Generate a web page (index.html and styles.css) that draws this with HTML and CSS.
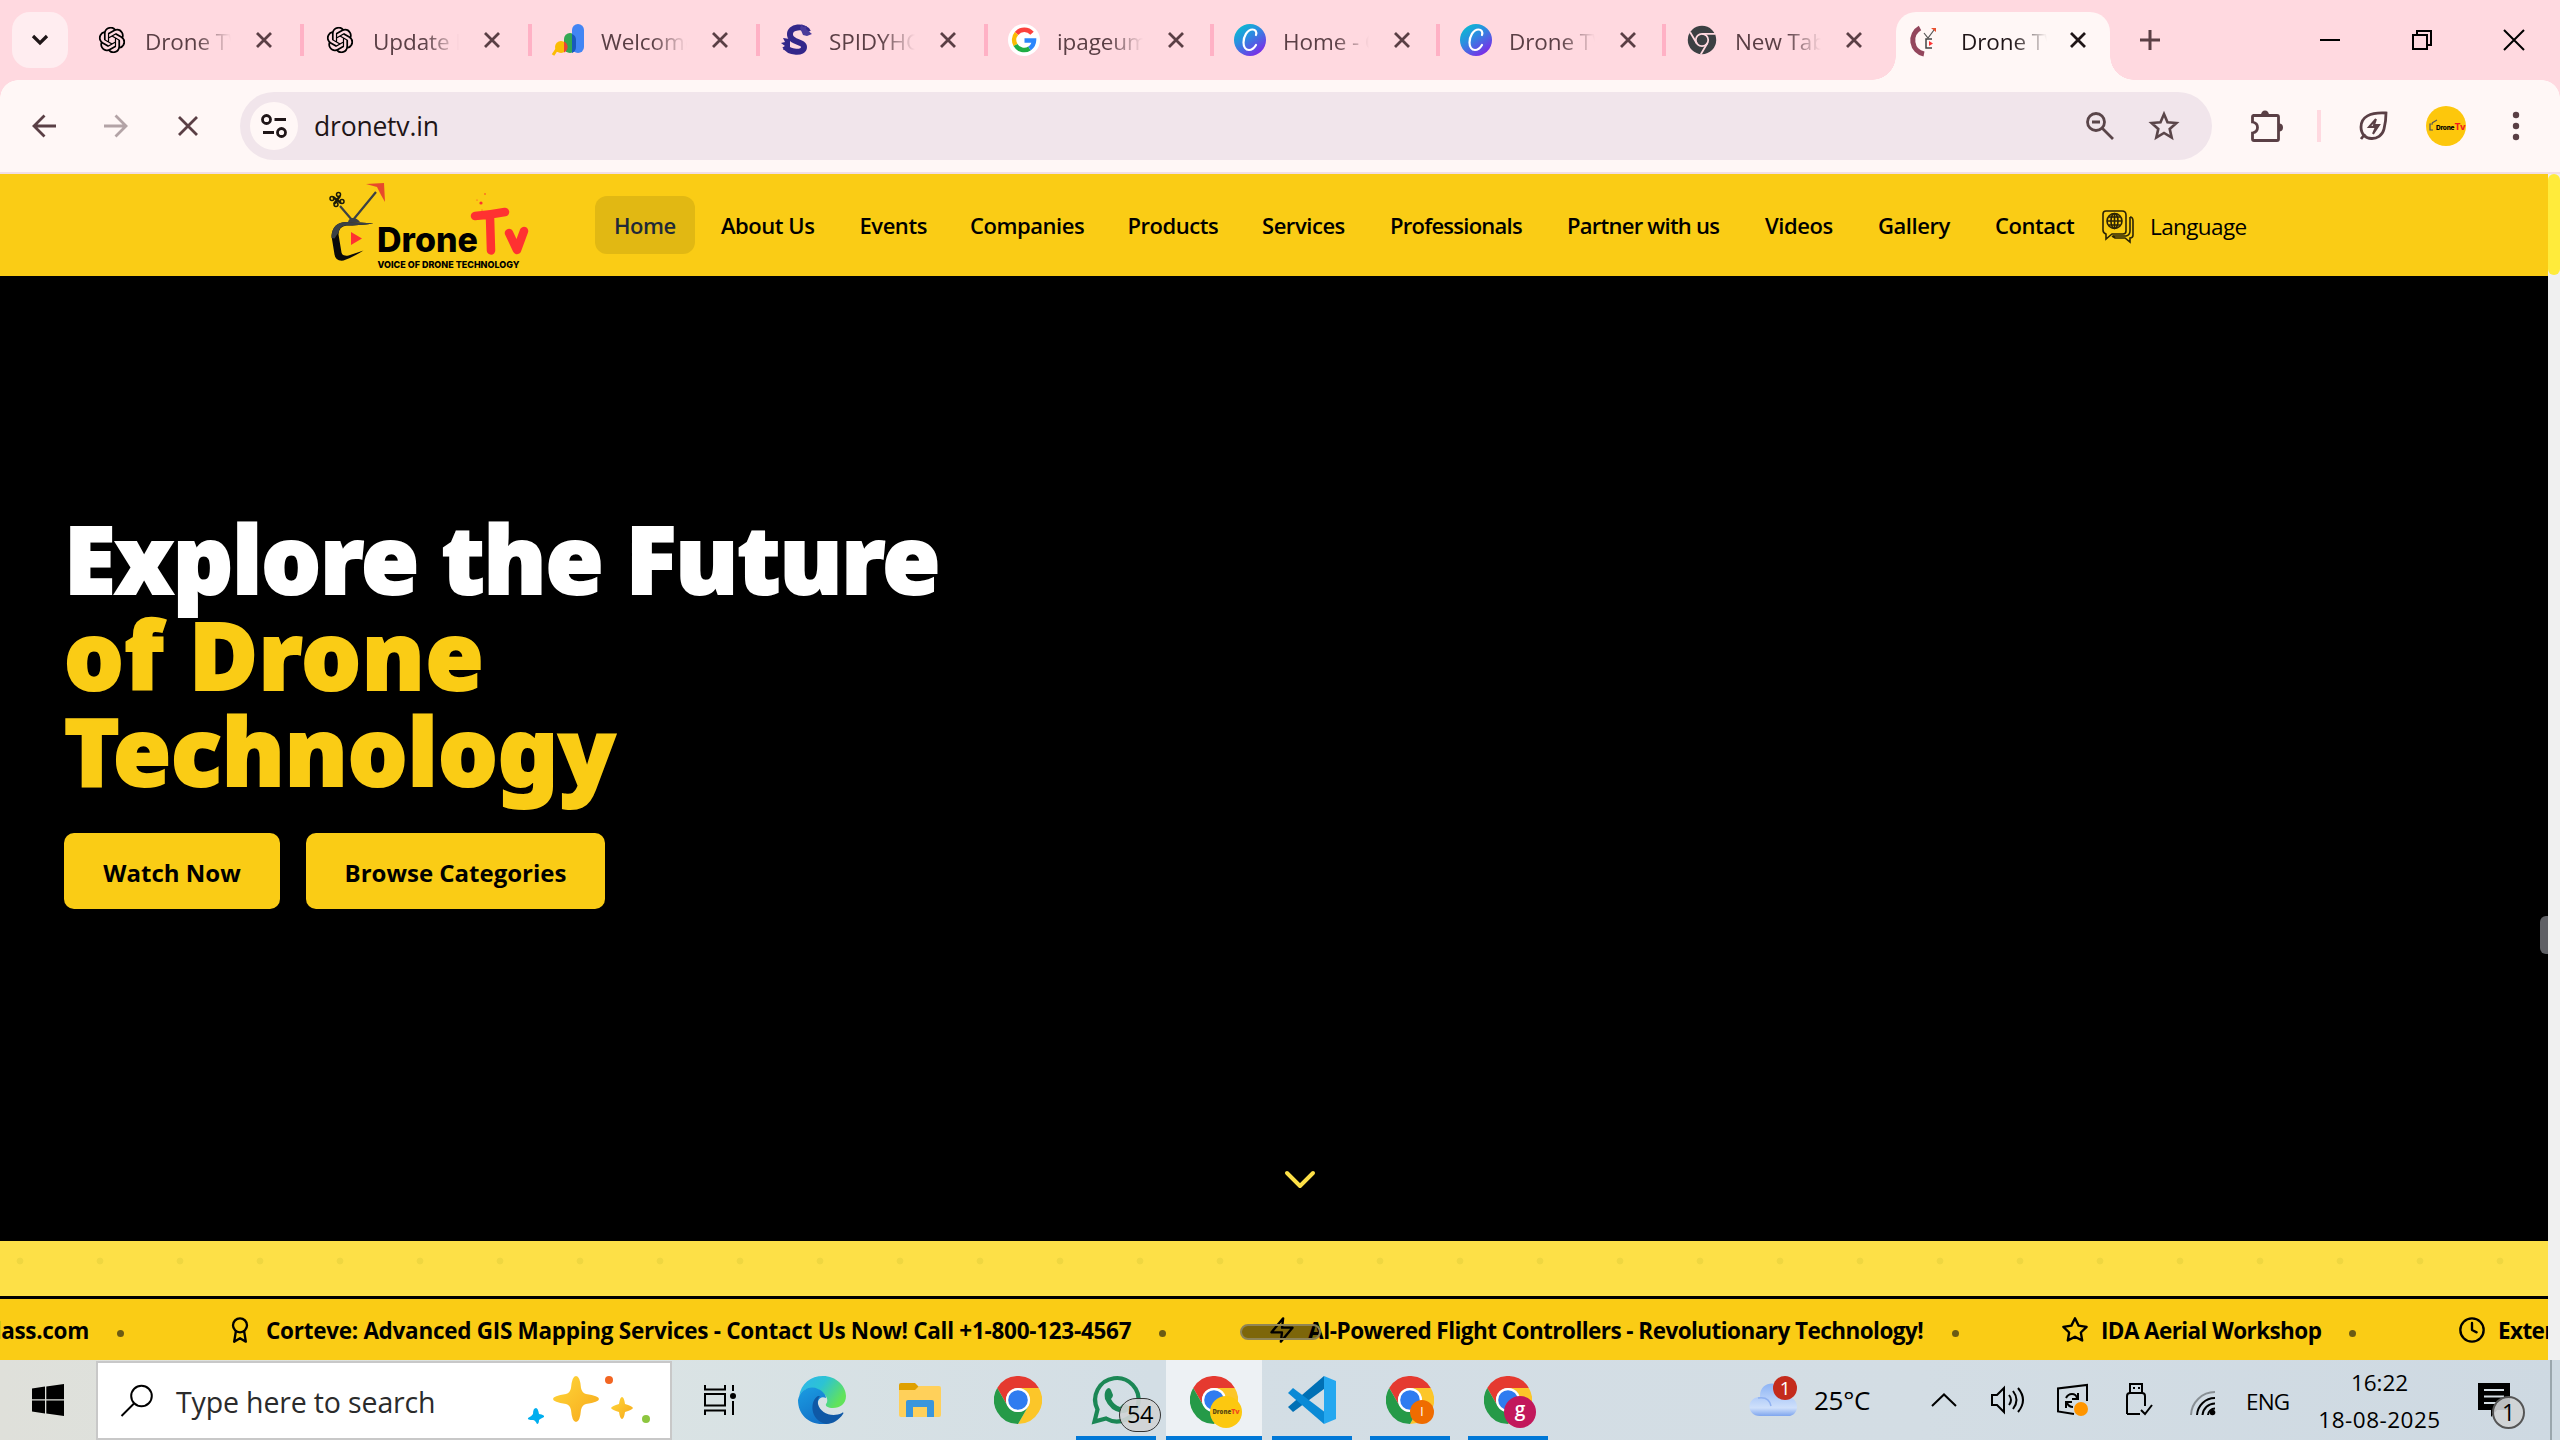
FILE: index.html
```html
<!DOCTYPE html>
<html lang="en">
<head>
<meta charset="utf-8">
<title>Drone TV</title>
<link rel="stylesheet" href="styles.css">
</head>
<body>
<svg class="defs" width="0" height="0">
  <defs>
    <linearGradient id="canva" x1="0" y1="0" x2=".7" y2="1"><stop offset="0" stop-color="#00c9cc"/><stop offset=".45" stop-color="#2a8fe0"/><stop offset="1" stop-color="#7d2ae8"/></linearGradient>
    <linearGradient id="cloud" x1="0" y1="0" x2="0" y2="1"><stop offset="0" stop-color="#8db4f5"/><stop offset=".75" stop-color="#cfe0fb"/><stop offset="1" stop-color="#7ea5ee"/></linearGradient>
    <linearGradient id="gold" x1="0" y1="0" x2="1" y2="1"><stop offset="0" stop-color="#ffd83a"/><stop offset="1" stop-color="#f7a81b"/></linearGradient>
    <linearGradient id="edgeTop" x1="0" y1="0" x2="1" y2=".5"><stop offset="0" stop-color="#2fb4ee"/><stop offset=".5" stop-color="#2cc3d4"/><stop offset="1" stop-color="#62e35a"/></linearGradient>
    <linearGradient id="edgeSide" x1="0" y1="0" x2=".5" y2="1"><stop offset="0" stop-color="#1b9de2"/><stop offset="1" stop-color="#1272c8"/></linearGradient>
  </defs>
  <symbol id="x" viewBox="0 0 18 18"><path d="M2 2l14 14M16 2L2 16" fill="none" stroke="currentColor" stroke-width="2.8"/></symbol>
  <symbol id="chatgpt" viewBox="0 0 24 24"><path d="M22.2819 9.8211a5.9847 5.9847 0 0 0-.5157-4.9108 6.0462 6.0462 0 0 0-6.5098-2.9A6.0651 6.0651 0 0 0 4.9807 4.1818a5.9847 5.9847 0 0 0-3.9977 2.9 6.0462 6.0462 0 0 0 .7427 7.0966 5.98 5.98 0 0 0 .511 4.9107 6.051 6.051 0 0 0 6.5146 2.9001A5.9847 5.9847 0 0 0 13.2599 24a6.0557 6.0557 0 0 0 5.7718-4.2058 5.9894 5.9894 0 0 0 3.9977-2.9001 6.0557 6.0557 0 0 0-.7475-7.0729zm-9.022 12.6081a4.4755 4.4755 0 0 1-2.8764-1.0408l.1419-.0804 4.7783-2.7582a.7948.7948 0 0 0 .3927-.6813v-6.7369l2.02 1.1686a.071.071 0 0 1 .038.052v5.5826a4.504 4.504 0 0 1-4.4945 4.4944zm-9.6607-4.1254a4.4708 4.4708 0 0 1-.5346-3.0137l.142.0852 4.783 2.7582a.7712.7712 0 0 0 .7806 0l5.8428-3.3685v2.3324a.0804.0804 0 0 1-.0332.0615L9.74 19.9502a4.4992 4.4992 0 0 1-6.1408-1.6464zM2.3408 7.8956a4.485 4.485 0 0 1 2.3655-1.9728V11.6a.7664.7664 0 0 0 .3879.6765l5.8144 3.3543-2.0201 1.1685a.0757.0757 0 0 1-.071 0l-4.8303-2.7865A4.504 4.504 0 0 1 2.3408 7.872zm16.5963 3.8558L13.1038 8.364 15.1192 7.2a.0757.0757 0 0 1 .071 0l4.8303 2.7913a4.4944 4.4944 0 0 1-.6765 8.1042v-5.6772a.79.79 0 0 0-.407-.667zm2.0107-3.0231l-.142-.0852-4.7735-2.7818a.7759.7759 0 0 0-.7854 0L9.409 9.2297V6.8974a.0662.0662 0 0 1 .0284-.0615l4.8303-2.7866a4.4992 4.4992 0 0 1 6.6802 4.66zM8.3065 12.863l-2.02-1.1638a.0804.0804 0 0 1-.038-.0567V6.0742a4.4992 4.4992 0 0 1 7.3757-3.4537l-.142.0805L8.704 5.459a.7948.7948 0 0 0-.3927.6813zm1.0976-2.3654l2.602-1.4998 2.6069 1.4998v2.9994l-2.5974 1.4997-2.6067-1.4997Z"/></symbol>
  <symbol id="canvaIcon" viewBox="0 0 32 32"><circle cx="16" cy="16" r="16" fill="url(#canva)"/><path d="M22 11c1-3-.5-5.500-3.500-5.500C13 5.500 9.500 13 9.500 18.500c0 4.500 2.200 7.500 5.500 7.500 3 0 5.500-2.500 7-5" fill="none" stroke="#fff" stroke-width="2.200" stroke-linecap="round"/></symbol>
  <symbol id="chrome" viewBox="0 0 48 48">
    <path fill="#e53a30" d="M3.200 12A24 24 0 0 1 44.800 12H24A12 12 0 0 0 13.600 30Z"/>
    <path fill="#fcc629" d="M44.800 12A24 24 0 0 1 24 48L34.400 30A12 12 0 0 0 24 12Z"/>
    <path fill="#259a48" d="M24 48A24 24 0 0 1 3.200 12L13.600 30A12 12 0 0 0 34.400 30Z"/>
    <circle cx="24" cy="24" r="12" fill="#fff"/><circle cx="24" cy="24" r="9.800" fill="#2f7cf0"/>
  </symbol>
</svg>

<header class="tabstrip">
  <div class="tab-search"><svg width="18" height="12" viewBox="0 0 18 12"><path d="M2 2l7 7 7-7" fill="none" stroke="#1f1517" stroke-width="3.200"/></svg></div>
  <div class="tab"><svg class="fav" viewBox="-2.500 -2.500 29 29"><use href="#chatgpt" width="24" height="24"/></svg><span class="tab-title">Drone TV</span><svg class="tab-x"><use href="#x"/></svg></div>
  <div class="tab"><svg class="fav" viewBox="-2.500 -2.500 29 29"><use href="#chatgpt" width="24" height="24"/></svg><span class="tab-title">Update N</span><svg class="tab-x"><use href="#x"/></svg></div>
  <div class="tab"><svg class="fav" viewBox="0 0 32 32"><path d="M1 31L7 22" stroke="#fbbc04" stroke-width="3"/><circle cx="9" cy="23" r="6" fill="#fbbc04"/><rect x="12" y="9" width="12" height="20" rx="6" fill="#34a853"/><path d="M12 17.500a6 6 0 0 1 0 11z" fill="#ea4335"/><rect x="20" y="0" width="12" height="29" rx="6" fill="#4285f4"/><path d="M20 10q4 1.500 4 6v7q0 4-4 6z" fill="#185abc"/></svg><span class="tab-title">Welcome</span><svg class="tab-x"><use href="#x"/></svg></div>
  <div class="tab"><svg class="fav" viewBox="0 0 32 32"><path d="M28 8C25 1 9 2 10 11c1 8 14 6 14 12 0 7-15 6-19-1" fill="none" stroke="#33278a" stroke-width="6"/><path d="M20 4l2-4 1 3 4-1-1 3 6 5-5 2-4-1z" fill="#4b3a9b"/><path d="M10 15l-7-1 2 4-4 1 4 3-2 4 7-2z" fill="#33278a"/></svg><span class="tab-title">SPIDYHO</span><svg class="tab-x"><use href="#x"/></svg></div>
  <div class="tab tab--narrow"><svg class="fav" viewBox="0 0 32 32"><circle cx="16" cy="16" r="16" fill="#fff"/><g fill="none" stroke-width="4.500"><path d="M24 9.300A10 10 0 0 0 8.500 9.500" stroke="#fc413d"/><path d="M8.500 9.500A10 10 0 0 0 7.500 21" stroke="#fbbc04"/><path d="M7.500 21A10 10 0 0 0 21.500 24.500" stroke="#1fae45"/><path d="M21.500 24.500A10 10 0 0 0 26 16.500H16.500" stroke="#2b86fc"/></g></svg><span class="tab-title">ipageum</span><svg class="tab-x"><use href="#x"/></svg></div>
  <div class="tab tab--narrow"><svg class="fav"><use href="#canvaIcon"/></svg><span class="tab-title">Home - C</span><svg class="tab-x"><use href="#x"/></svg></div>
  <div class="tab tab--narrow"><svg class="fav"><use href="#canvaIcon"/></svg><span class="tab-title">Drone TV</span><svg class="tab-x"><use href="#x"/></svg></div>
  <div class="tab tab--last"><svg class="fav" viewBox="-3 -3 54 54"><circle cx="24" cy="24" r="24" fill="#3c4043"/><circle cx="24" cy="24" r="10.500" fill="none" stroke="#ffd9e0" stroke-width="3"/><path d="M24 13.500H46M15 29.500L4 11M33 29.500L22 48" stroke="#ffd9e0" stroke-width="3"/></svg><span class="tab-title">New Tab</span><svg class="tab-x"><use href="#x"/></svg></div>
  <div class="tab tab--active"><svg class="fav" viewBox="0 0 32 32"><path d="M9 4a14 14 0 0 0 4 26" fill="none" stroke="#93465c" stroke-width="5"/><path d="M13 9l4 5 6-8" fill="none" stroke="#555" stroke-width="1.200"/><path d="M20 4l5 0 0 4z" fill="#e8502f"/><path d="M21 15h-6v9h6" fill="none" stroke="#444" stroke-width="1.500"/><path d="M18 17l4 2.500-4 2.500z" fill="#f33"/></svg><span class="tab-title">Drone TV</span><svg class="tab-x"><use href="#x"/></svg></div>
  <svg class="new-tab" width="20" height="20" viewBox="0 0 20 20"><path d="M10 0v20M0 10h20" stroke="#5a3f45" stroke-width="3"/></svg>
  <div class="window-buttons">
    <svg viewBox="0 0 20 20"><path d="M0 10h20" stroke="#000" stroke-width="2"/></svg>
    <svg viewBox="0 0 20 20"><path d="M1 5h14v14H1zM5 5V1h14v14h-4" fill="none" stroke="#000" stroke-width="2"/></svg>
    <svg viewBox="0 0 20 20"><path d="M0 0l20 20M20 0L0 20" stroke="#000" stroke-width="2"/></svg>
  </div>
</header>

<div class="toolbar">
  <svg class="tool-back" viewBox="0 0 24 24"><path d="M24 12H2M12.500 1.500L2 12l10.500 10.500" fill="none" stroke="#5a3f45" stroke-width="2.800"/></svg>
  <svg class="tool-forward" viewBox="0 0 24 24"><path d="M0 12h22M11.500 1.500L22 12 11.500 22.500" fill="none" stroke="#b3a3a6" stroke-width="2.800"/></svg>
  <svg class="tool-stop" viewBox="0 0 20 20"><path d="M1 1l18 18M19 1L1 19" stroke="#5a3f45" stroke-width="2.800"/></svg>
  <div class="omnibox">
    <span class="site-info"><svg width="26" height="24" viewBox="0 0 26 24"><g fill="none" stroke="#1f1517" stroke-width="2.800"><circle cx="5.500" cy="5.500" r="4"/><path d="M13.500 5.500H25M2 18.500h11"/><circle cx="20.500" cy="18.500" r="4"/></g></svg></span>
    <span class="url">dronetv.in</span>
    <svg class="omni-zoom" width="30" height="30" viewBox="0 0 30 30"><g fill="none" stroke="#5a4549" stroke-width="2.800"><circle cx="11" cy="11" r="8.500"/><path d="M17 17l11 11M7 11h8"/></g></svg>
    <svg width="32" height="32" viewBox="0 0 32 32"><path d="M16 4l3.500 8.200 8.900.8-6.700 5.900 2 8.700L16 23l-7.700 4.600 2-8.700L3.600 13l8.900-.8z" fill="none" stroke="#5a4549" stroke-width="2.600"/></svg>
  </div>
  <svg class="tool-ext" width="34" height="34" viewBox="0 0 34 34"><path d="M4 6.500h24q1.500 0 1.500 1.500v22q0 1.500-1.500 1.500H5q-1.500 0-1.500-1.500v-6q5-1 5-5.500t-5-5.500V8q0-1.500 1.500-1.500z" fill="none" stroke="#5a3f45" stroke-width="2.800"/><path d="M12 6a4 4.500 0 0 1 8 0zM30 14.500a4 4 0 0 1 0 8z" fill="#5a3f45"/></svg>
  <span class="tool-divider"></span>
  <svg class="tool-leaf" width="32" height="32" viewBox="0 0 32 32"><path d="M28 3C12 2 3 7 3 17c0 15 20 15 23 2 1.500-6 2-10 2-16zM7 24l-4 5" fill="none" stroke="#5a3f45" stroke-width="2.800"/><path d="M18 9l-7 8h7l-3 7M18 9l-2 6h5l-6 9" fill="none" stroke="#5a3f45" stroke-width="2"/></svg>
  <svg class="avatar" width="40" height="40" viewBox="0 0 40 40"><circle cx="20" cy="20" r="20" fill="#fdc70c"/><path d="M7 18H4v6h3M6 17l5-3" fill="none" stroke="#555" stroke-width="1.200"/><text x="10" y="24" class="mini-logo">Drone<tspan class="red" dx=".3">Tv</tspan></text></svg>
  <svg class="tool-menu" width="8" height="30" viewBox="0 0 8 30"><g fill="#5a3f45"><circle cx="4" cy="4" r="3.200"/><circle cx="4" cy="15" r="3.200"/><circle cx="4" cy="26" r="3.200"/></g></svg>
</div>

<div class="viewport">
  <main class="site">
    <nav class="site-nav">
      <svg class="logo" width="240" height="100" viewBox="0 4 240 100">
        <path d="M30 36L42 50M66 22L43 50" stroke="#3b4145" stroke-width="2.200"/>
        <path d="M56 14l18-1 1 19-4-7-4-8z" fill="#e8492b"/>
        <g fill="none" stroke="#1a1a08" stroke-width="1.500"><path d="M23 27l8 6M30 26l-6 8" stroke-width="2.400"/><circle cx="22" cy="28.500" r="2"/><circle cx="28.500" cy="24.500" r="2"/><circle cx="32" cy="31.500" r="2"/><circle cx="26" cy="34.500" r="2"/></g>
        <path d="M38 52q1-4 5-4t7 4z" fill="#3b4145"/>
        <path d="M21.500 66q1-13 14-14 14 0 28 1.500-16 2-27 2-8 1-8 9l3 18q1 4 7 3l15-5q-11 7-20 10-8 1-9-6z" fill="#0a0a0a"/>
        <path d="M21.500 68q0-16 15-16 14 0 27 1.500-16 2-27 2-7 0-8 7l-4 6z" fill="#3b4145"/>
        <path d="M41 62v13l11-6.500z" fill="#ff3131"/>
        <text x="67" y="81.500" class="logo-drone" textLength="101" lengthAdjust="spacingAndGlyphs">Drone</text>
        <g class="logo-tv"><path d="M165 46q14-1 30-4M180 47l1 33.500M199 63l8 17 7-19"/></g>
        <g fill="#ff3131"><circle cx="171" cy="33" r="1.600"/><circle cx="175" cy="24" r=".8"/><circle cx="167" cy="30" r=".6"/><circle cx="172" cy="40" r=".6"/></g>
        <text x="67.500" y="98" class="logo-tag" textLength="142" lengthAdjust="spacingAndGlyphs">VOICE OF DRONE TECHNOLOGY</text>
      </svg>
      <div class="menu">
        <a class="menu-item menu-item--on">Home</a><a class="menu-item">About Us</a><a class="menu-item nudge">Events</a><a class="menu-item">Companies</a><a class="menu-item nudge">Products</a><a class="menu-item">Services</a><a class="menu-item tight">Professionals</a><a class="menu-item tight">Partner with us</a><a class="menu-item">Videos</a><a class="menu-item">Gallery</a><a class="menu-item">Contact</a>
      </div>
      <div class="language">
        <svg width="34" height="34" viewBox="0 0 34 34"><g fill="none" stroke="#2b2305" stroke-width="1.600"><path d="M5 2h16q4 0 4 4v16q0 3-3 3H11l-6 5v-5q-3-1-3-4V5q0-3 3-3z"/><circle cx="13.500" cy="12" r="7.500"/><ellipse cx="13.500" cy="12" rx="3.500" ry="7.500"/><path d="M6 12h15M13.500 4.500v15M7.500 8h12M7.500 16h12M29 8q3 0 3 4v14q0 3-3 3v4l-5-4H14l-3-2M29 8v14q0 4-4 5H12"/></g></svg>
        <span>Language</span>
      </div>
    </nav>

    <section class="hero">
      <h1><span class="lead">Explore the Future</span><span class="gold gold--wide">of Drone</span><span class="gold">Technology</span></h1>
      <div class="cta"><button class="cta-watch">Watch Now</button><button class="cta-browse">Browse Categories</button></div>
      <svg class="scroll-hint" width="34" height="24" viewBox="0 0 34 24"><path d="M4 4l13 13L30 4" fill="none" stroke="#fde047" stroke-width="4" stroke-linecap="round" stroke-linejoin="round"/></svg>
      <span class="side-handle"></span>
    </section>

    <div class="dots"></div>

    <div class="ticker">
      <span class="tick-text tick-text--cut">dass.com</span><i></i>
      <svg viewBox="0 0 24 24"><circle cx="12" cy="8" r="6"/><path d="M15.477 12.890L17 22l-5-3-5 3 1.523-9.110"/></svg><span class="tick-text t1">Corteve: Advanced GIS Mapping Services - Contact Us Now! Call +1-800-123-4567</span><i></i>
      <svg viewBox="0 0 24 24"><path d="M13 2L3 14h9l-1 8 10-12h-9l1-8z"/></svg><span class="tick-text t2">AI-Powered Flight Controllers - Revolutionary Technology!</span><i></i>
      <svg viewBox="0 0 24 24"><path d="M12 2l3.090 6.260L22 9.270l-5 4.870 1.180 6.880L12 17.770l-6.180 3.250L7 14.140 2 9.270l6.910-1.010z"/></svg><span class="tick-text t3">IDA Aerial Workshop</span><i></i>
      <svg viewBox="0 0 24 24"><circle cx="12" cy="12" r="10"/><path d="M12 6v6l4 2"/></svg><span class="tick-text t4">External</span>
      <b class="pill"></b>
    </div>
  </main>
  <div class="scrollbar"><span class="thumb"></span></div>
</div>

<footer class="taskbar">
  <div class="start"><svg width="32" height="32" viewBox="0 0 32 32"><path d="M0 4.500L13 2.600V15.300H0zM14.300 2.400L32 0v15.300H14.300zM0 16.600h13v12.800L0 27.500zM14.300 16.600H32V32l-17.700-2.500z"/></svg></div>
  <div class="search">
    <svg width="34" height="34" viewBox="0 0 34 34"><g fill="none" stroke="#000" stroke-width="2"><circle cx="21.500" cy="12" r="10.300"/><path d="M14 19.500L1.500 32"/></g></svg>
    <span>Type here to search</span>
    <svg class="sparkles" width="124" height="50" viewBox="0 0 124 50"><path d="M49 1q4 0 5 12 1 5 5 6 13 2 13 5t-13 5q-4 1-5 6-1 12-5 12t-5-12q-1-5-5-6-13-2-13-5t13-5q4-1 5-6 1-12 5-12z" fill="url(#gold)"/><path d="M95 22q2 0 3 7 7 2 8 4-1 2-8 4-1 7-3 7t-3-7q-7-2-8-4 1-2 8-4 1-7 3-7z" fill="url(#gold)"/><circle cx="82" cy="5" r="4" fill="#f26522"/><path d="M9 33q2 0 3 6 6 1 5 3-4 2-5 3 0 4-2 4-2-4-4-4-6 0-5-2 4-2 5-4 0-6 3-6z" fill="#00aeef"/><circle cx="119" cy="44" r="4" fill="#8dc63f"/></svg>
  </div>
  <div class="task-view"><svg width="32" height="32" viewBox="0 0 32 32"><path d="M1 1v4.500h20V1M1 31v-4.500h20V31M1 10h20v11.500H1zM29 1v6M29 17v14" fill="none" stroke="#000" stroke-width="2"/><circle cx="29" cy="12" r="3"/></svg></div>
  <div class="apps">
    <div class="app"><svg viewBox="0 0 48 48"><path d="M1 21C3 7 13 0 25 0c13 0 23 10 23 20 0 8-6 12-13 12-5 0-8-2-7-4 3-3 1-10-7-14C13 10 4 13 1 21z" fill="url(#edgeTop)"/><path d="M0 24C2 14 12 9 20 13c5 2 8 6 8 9-6-3-10 3-8 11 2 8 8 12 14 13-3 2-7 2-10 2C10 48 0 38 0 24z" fill="url(#edgeSide)"/><path d="M20 20c-8 4-9 24 8 28 7 0 13-4 17-10 1-1 0-2-1-1-10 5-22 0-24-9-.6-3 0-6 2-8z" fill="#0f58a6"/></svg></div>
    <div class="app"><svg viewBox="0 0 48 48"><path d="M3 9q0-2 2-2h14l4 4-4 5H3z" fill="#dfa000"/><path d="M3 14h16l4-4h20q2 0 2 2v27q0 2-2 2H5q-2 0-2-2z" fill="#ffd05a"/><path d="M10 26q0-2 2-2h24q2 0 2 2v15h-7V31H17v10h-7z" fill="#3a96dd"/></svg></div>
    <div class="app"><svg><use href="#chrome"/></svg></div>
    <div class="app app--open"><svg viewBox="0 0 48 48"><path d="M2.500 45.500l3-12A21.700 21.700 0 1 1 14 42.500z" fill="none" stroke="#1b8755" stroke-width="4.200"/><path d="M14 14q3-4 5 0l2 5q0 2-2 4 3 6 9 8l3-3q2-1 7 3-1 6-8 6-12-2-17-14-1-6 1-9z" fill="#1b8755"/></svg><b class="count">54</b></div>
    <div class="app app--open app--current"><svg><use href="#chrome"/></svg><b class="badge badge--logo">Drone<em>Tv</em></b></div>
    <div class="app app--open"><svg viewBox="0 0 48 48"><path d="M0 31l5 5L36 13V0z" fill="#0070b5"/><path d="M0 17l5-5 31 23.500V48z" fill="#0a8ad6"/><path d="M36 0l12 5v38l-12 5z" fill="#25a8f0"/></svg></div>
    <div class="app app--open"><svg><use href="#chrome"/></svg><b class="badge badge--orange">I</b></div>
    <div class="app app--open"><svg><use href="#chrome"/></svg><b class="badge badge--pink">g</b></div>
  </div>
  <div class="weather"><svg width="50" height="42" viewBox="0 0 50 42"><path d="M11 40C-3 40-3 21 11 21 10 2 37 4 36 21c16-1 15 19 3 19z" fill="url(#cloud)"/><path d="M9 22q11-2 13 8" fill="none" stroke="#8fb1f2" stroke-width="1.500"/><circle cx="36" cy="12" r="12" fill="#c42b1c"/><text x="36" y="19" text-anchor="middle" fill="#fff" font-size="19">1</text></svg><span>25°C</span></div>
  <div class="tray">
    <svg width="26" height="14" viewBox="0 0 26 14"><path d="M1 13L13 1.500 25 13" fill="none" stroke="#000" stroke-width="2"/></svg>
    <svg width="34" height="30" viewBox="0 0 34 30"><path d="M1 10h5l7-7v24l-7-7H1zM18 10q4 5 0 10M22 6q7 9 0 18M27 3q10 12 0 24" fill="none" stroke="#000" stroke-width="2"/></svg>
    <svg width="34" height="34" viewBox="0 0 34 34"><path d="M31 18V2L2 5.500v23L18 31" fill="none" stroke="#000" stroke-width="2"/><path d="M10 15q2-4 6-4 4 0 5 4M22 10v6h-6M10 25v-6h6M11 20q2 4 6 4" fill="none" stroke="#000" stroke-width="2"/><circle cx="25" cy="26" r="7" fill="#ff9500"/></svg>
    <svg width="28" height="34" viewBox="0 0 28 34"><path d="M4 10V1h12v9M1 31V13q0-3 3-3h12q3 0 3 3v10M1 31h13M15 27l4 4 7-9" fill="none" stroke="#000" stroke-width="2"/><path d="M7 4h2v2H7zM12 4h2v2h-2z"/></svg>
    <svg width="26" height="26" viewBox="0 0 26 26"><g fill="none" stroke="#000" stroke-width="2"><path d="M1 25A24 24 0 0 1 25 2" stroke="#888f94"/><path d="M7 25A18 18 0 0 1 25 8M12.500 25A12.500 12.500 0 0 1 25 13.500M18 25A7 7 0 0 1 25 18.500"/></g><circle cx="22.500" cy="22.500" r="2.800"/></svg>
    <span class="lang">ENG</span>
  </div>
  <div class="clock"><span class="time">16:22</span><span class="date">18-08-2025</span></div>
  <div class="notes"><svg width="32" height="34" viewBox="0 0 32 34"><path d="M0 0h32v27H19l-6 7v-7H0z"/><path d="M6 7h20M6 13.500h20M6 20h14" stroke="#d5dee4" stroke-width="2.200"/></svg><b>1</b></div>
  <span class="desktop-edge"></span>
</footer>
</body>
</html>
```
FILE: styles.css
```css
* { box-sizing: border-box; }
body { margin: 0; width: 2560px; height: 1440px; overflow: hidden; display: flex; flex-direction: column; font-family: "Open Sans", "Noto Sans", sans-serif; color: #000; background: #000; }
svg { display: block; flex: none; overflow: visible; }
.defs { position: absolute; }
em, b { font-style: normal; }

/* Tab strip */
.tabstrip { height: 80px; flex: none; display: flex; align-items: center; background: #ffd9e0; }
.tab-search { width: 56px; height: 56px; margin: 0 8px 0 12px; border-radius: 18px; background: #ffedf0; display: flex; align-items: center; justify-content: center; }
.tab { width: 228px; height: 32px; display: flex; align-items: center; padding: 0 0 0 20px; border-right: 4px solid #ffb1c5; color: #5a3f45; }
.tab--narrow { width: 226px; }
.tab--last { width: 230px; border: 0; }
.fav { width: 32px; height: 32px; }
.tab-title { width: 86px; margin-left: 17px; overflow: hidden; white-space: nowrap; font-size: 22.500px; line-height: 34px; padding-top: 3px; letter-spacing: -.1px; -webkit-mask-image: linear-gradient(90deg, #000 60%, transparent); mask-image: linear-gradient(90deg, #000 60%, transparent); }
.tab-x { width: 18px; height: 18px; margin-left: 24px; }
.tab--active { position: relative; width: 214px; height: 68px; align-self: flex-end; background: #fff7f6; border: 0; border-radius: 20px 20px 0 0; padding: 0 0 12px 15px; color: #1f1517; }
.tab--active .tab-title { margin-left: 18px; }
.tab--active .tab-x { margin-left: 22px; }
.tab--active::before, .tab--active::after { content: ""; position: absolute; bottom: 0; width: 24px; height: 24px; }
.tab--active::before { left: -24px; background: radial-gradient(circle at 0 0, transparent 23.500px, #fff7f6 24px); }
.tab--active::after { right: -24px; background: radial-gradient(circle at 100% 0, transparent 23.500px, #fff7f6 24px); }
.new-tab { margin-left: 30px; }
.window-buttons { margin-left: auto; display: flex; gap: 72px; padding-right: 36px; }
.window-buttons svg { width: 20px; height: 20px; }

/* Toolbar */
.toolbar { height: 94px; flex: none; display: flex; align-items: center; border-bottom: 2px solid #f2dfe5; padding-left: 32px; background: radial-gradient(circle at 18px 18px, #fff7f6 17.500px, #ffd9e0 18px) 0 0 / 18px 18px no-repeat, radial-gradient(circle at 0 18px, #fff7f6 17.500px, #ffd9e0 18px) 100% 0 / 18px 18px no-repeat, #fff7f6; }
.tool-back, .tool-forward { width: 24px; height: 24px; }
.tool-forward { margin-left: 48px; }
.tool-stop { width: 20px; height: 20px; margin: 0 42px 0 50px; }
.omnibox { width: 1972px; flex: none; height: 68px; border-radius: 34px; background: #f1e5eb; display: flex; align-items: center; padding: 0 32px 0 10px; }
.site-info { width: 48px; height: 48px; border-radius: 50%; background: #fff7f6; display: flex; align-items: center; justify-content: center; }
.url { margin: 0 auto 0 16px; font-size: 26.500px; color: #1f1517; letter-spacing: -.2px; }
.omni-zoom { margin-right: 33px; }
.tool-ext { margin-left: 37px; }
.tool-divider { width: 4px; height: 32px; margin: 0 37px 0 34px; background: #ffd9e0; }
.avatar { margin: 0 auto 0 36px; }
.mini-logo { font: 800 6.500px Inter, sans-serif; letter-spacing: -.2px; }
.mini-logo .red { fill: #f21d1d; font-size: 9px; }
.tool-menu { margin-right: 40px; }

/* Page */
.viewport { height: 1186px; flex: none; display: flex; }
.site { width: 2548px; display: flex; flex-direction: column; overflow: hidden; }
.scrollbar { width: 12px; background: #f0f0f0; }
.thumb { display: block; height: 101px; border-radius: 6px; background: #ffeb3b; }
.site-nav { height: 102px; flex: none; background: #facc15; display: flex; padding-left: 310px; }
.logo { margin-right: 45px; }
.logo-drone { font: 800 34.500px Inter, sans-serif; }
.logo-tag { font: 800 9.500px Inter, sans-serif; }
.logo-tv { fill: none; stroke: #ff3131; stroke-width: 8.500; stroke-linecap: round; stroke-linejoin: round; }
.menu { display: grid; grid-template-columns: 106px 140px 109px 159px 133px 128px 177px 198px 113px 117px 119px; padding-top: 22px; }
.menu-item { height: 58px; padding-left: 20px; font-size: 22px; font-weight: 600; line-height: 58px; white-space: nowrap; letter-spacing: -.45px; }
.menu-item.nudge { padding-left: 18.500px; }
.menu-item.tight { letter-spacing: -.75px; }
.menu-item--on { width: 100px; padding-left: 19px; border-radius: 12px; background: #e1b813; color: #1f2937; }
.language { display: flex; height: 103px; align-items: center; gap: 15px; margin-left: 7px; font-size: 22.500px; letter-spacing: -.6px; }
.language span { padding-top: 1px; }
.hero { position: relative; height: 965px; flex: none; background: #000; padding: 234px 64px 0; }
.hero h1 { margin: 0; color: #fff; font: 900 94px/96px "Noto Sans", "Open Sans", sans-serif; -webkit-text-stroke: 2px currentColor; }
.hero h1 span { display: block; }
.lead { letter-spacing: -1.100px; }
.gold { color: #facc15; }
.gold--wide { letter-spacing: .6px; }
.cta { display: flex; gap: 26px; margin-top: 35px; }
.cta button { height: 76px; border: 0; padding: 2px 0 0; border-radius: 10px; background: #facc15; font: 700 24px "Open Sans", sans-serif; color: #000; }
.cta .cta-watch { width: 216px; }
.cta .cta-browse { width: 299px; }
.scroll-hint { position: absolute; left: 1283px; top: 893px; }
.side-handle { position: absolute; right: 0; top: 640px; width: 8px; height: 38px; border-radius: 6px 0 0 6px; background: #5f6065; }
.dots { height: 55px; flex: none; background: radial-gradient(circle at 20px 20px, #efd741 3px, transparent 3.800px) 0 0 / 80px 80px #fde047; }
.ticker { position: relative; height: 64px; flex: none; border-top: 3px solid #000; background: #facc15; display: flex; align-items: center; white-space: nowrap; }
.ticker svg { width: 28px; height: 28px; margin: 0 12px 0 102px; fill: none; stroke: #000; stroke-width: 2; stroke-linecap: round; stroke-linejoin: round; }
.ticker i { width: 7px; height: 7px; margin: 8px 0 0 28px; border-radius: 50%; background: #6b5a14; flex: none; }
.tick-text { font-size: 22.500px; font-weight: 700; line-height: 30px; padding-top: 2px; flex: none; }
.tick-text--cut { width: 89px; display: flex; justify-content: flex-end; letter-spacing: -.3px; }
.t1 { width: 865px; letter-spacing: -.28px; } .t2 { width: 616px; letter-spacing: -.55px; } .t3 { width: 220px; letter-spacing: -.6px; } .t4 { letter-spacing: -.6px; }
.pill { position: absolute; left: 1240px; top: 25px; width: 81px; height: 16px; border: 2px solid #8f8456; border-radius: 8px; background: rgba(0,0,0,.5); }

/* Taskbar */
.taskbar { height: 80px; flex: none; display: flex; align-items: center; background: linear-gradient(90deg, #dfe0da 0, #dae3e4 25%, #d3dee5 45%, #d3dde4 75%, #ced9e2 100%); position: relative; }
.start { width: 96px; padding-left: 32px; }
.search { width: 576px; height: 79px; align-self: flex-end; background: #fff; border: 2px solid #c8c8c8; display: flex; align-items: center; padding-left: 22px; }
.search svg:first-child { margin-right: 22px; }
.search span { font-size: 28.500px; color: #2b2b2b; padding-top: 2px; letter-spacing: -.15px; }
.sparkles { position: absolute; left: 527px; top: 15px; }
.task-view { width: 101px; padding-left: 32px; }
.apps { display: flex; height: 80px; }
.app { position: relative; width: 98px; display: flex; align-items: center; justify-content: center; }
.app svg { width: 48px; height: 48px; }
.app--open::after { content: ""; position: absolute; left: 9px; right: 9px; bottom: 0; height: 4px; background: #0078d7; }
.app--current::before { content: ""; position: absolute; inset: 0 1px; background: #edf1f4; }
.app--current::after { left: 1px; right: 1px; }
.app--current svg { position: relative; }
.count { position: absolute; left: 52px; top: 38px; width: 42px; height: 34px; border: 1.500px solid #333; border-radius: 17px; background: rgba(208,211,213,.92); font-size: 23.500px; font-weight: 400; line-height: 31px; text-align: center; letter-spacing: -.5px; }
.badge { position: absolute; left: 45px; top: 36px; width: 32px; height: 32px; border-radius: 50%; text-align: center; color: #fff; }
.badge--logo { background: #fcc810; color: #5c4a10; font-size: 6px; font-weight: 800; line-height: 32px; }
.badge--logo em { color: #f04a1b; font-size: 7px; }
.badge--orange { left: 49px; top: 40px; width: 24px; height: 24px; background: #ef6c00; font-size: 12px; font-weight: 400; line-height: 24px; }
.badge--pink { background: #c2185b; font-size: 19px; font-weight: 600; line-height: 27px; }
.weather { display: flex; align-items: center; gap: 15px; margin-left: 192px; width: 182px; font-size: 26px; letter-spacing: -.3px; }
.weather svg { margin-top: -6px; }
.tray { display: flex; align-items: center; height: 80px; width: 388px; }
.tray svg:nth-child(2) { margin-left: 34px; }
.tray svg:nth-child(3) { margin-left: 31px; }
.tray svg:nth-child(4) { margin-left: 36px; }
.tray svg:nth-child(5) { margin: 6px 0 0 36px; }
.lang { margin: 2px 0 0 30px; font-size: 22.500px; letter-spacing: -.8px; }
.clock { width: 121px; display: flex; flex-direction: column; align-items: center; font-size: 22.500px; line-height: 37px; padding-top: 2px; white-space: nowrap; }
.time { letter-spacing: -.1px; }
.date { letter-spacing: .5px; }
.notes { position: relative; margin-left: 38px; }
.notes b { position: absolute; left: 14px; top: 13px; width: 33px; height: 33px; border: 2px solid #555; border-radius: 50%; background: rgba(208,211,213,.9); font-size: 23px; font-weight: 400; line-height: 29px; text-align: center; }
.desktop-edge { position: absolute; right: 8px; top: 0; width: 2px; height: 80px; background: #9aa6ad; }
```
